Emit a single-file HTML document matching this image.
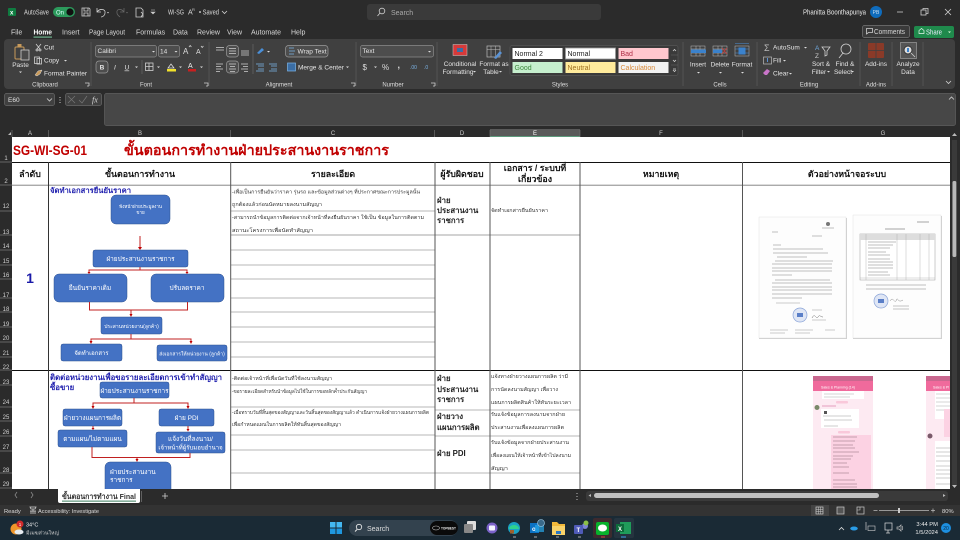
<!DOCTYPE html>
<html><head><meta charset="utf-8"><style>
html,body{margin:0;padding:0;background:#2b2b2b;width:960px;height:540px;overflow:hidden}
svg{display:block;font-family:"Liberation Sans","Noto Sans CJK SC","DejaVu Sans",sans-serif;filter:blur(.35px)}
.u{font-size:7px;fill:#d8d8d8}
.m{text-anchor:middle}
.w{font-size:6.5px;fill:#e4e4e4}
.h{font-size:6px;fill:#cfcfcf;text-anchor:middle}
.b{font-size:6.5px;fill:#fff;text-anchor:middle}
.th{font-size:8.8px;font-weight:bold;fill:#111;text-anchor:middle}
.c{font-size:5px;fill:#333}
.d{font-size:7.8px;font-weight:bold;fill:#222}
.ic{fill:none;stroke:#d0d0d0;stroke-width:.8}
.bx{fill:#4472c4;stroke:#2f528f;stroke-width:.5}
.ar{fill:none;stroke:#c02020;stroke-width:1}
.ah{fill:#c00000}
.cl{stroke:#a0a0a0;stroke-width:.7}
.vl{stroke:#555;stroke-width:1}
</style></head><body>
<svg width="960" height="540" viewBox="0 0 960 540" xmlns="http://www.w3.org/2000/svg">
<rect width="960" height="540" fill="#2b2b2b"/>
<!-- title bar -->
<rect x="8" y="8" width="8" height="8" rx="1" fill="#107c41"/><text x="10" y="14.5" font-size="6" font-weight="bold" fill="#fff">x</text>
<text x="24" y="14.500" class="u" textLength="25" lengthAdjust="spacingAndGlyphs">AutoSave</text>
<rect x="53" y="7" width="22" height="10" rx="5" fill="#2c9a5c"/><text x="56" y="14.5" font-size="6" fill="#dff">On</text><circle cx="70" cy="12" r="3.600" fill="#111"/>
<path class="ic" d="M82 8h7l1 1v7h-8zM84 8v3h4v-3M84 16v-3h4v3"/>
<path class="ic" d="M97 8v4h4M97 12c3-4 9-3 8 1 0 2-2 4-4 4"/><path d="M107 12l2 0-1 1.500z" fill="#ccc"/>
<path fill="none" stroke="#666" stroke-width=".8" d="M124 8v4h-4M124 12c-3-4-8-3-7 1 0 2 2 3 3 4"/><path d="M126 12l2 0-1 1.500z" fill="#666"/>
<path class="ic" d="M136 8h5l2 2v7h-7zM141 12l2 2-2 3"/>
<path d="M151 10h4M151 12l2 2 2-2z" stroke="#ccc" stroke-width=".6" fill="#ccc"/>
<text x="168" y="14.500" class="u" textLength="16" lengthAdjust="spacingAndGlyphs">WI-SG</text><text x="188" y="14.500" class="u">A</text><text x="192" y="11" font-size="4" fill="#ccc">R</text>
<text x="199" y="14.500" class="u" textLength="20" lengthAdjust="spacingAndGlyphs">• Saved</text><path class="ic" d="M222 11l2.500 2.500 2.500-2.500"/>
<rect x="367" y="4" width="234" height="16" rx="3" fill="#3a3a3a"/>
<circle cx="382" cy="11" r="2.800" class="ic"/><path class="ic" d="M380 13l-2.500 3"/><text x="391" y="15" class="u" style="fill:#aaa">Search</text>
<text x="803" y="14.500" class="u" style="fill:#e8e8e8" textLength="63" lengthAdjust="spacingAndGlyphs">Phanitta Boonthapunya</text>
<circle cx="876" cy="12" r="6" fill="#0f6cbd"/><text x="876" y="14" font-size="5" fill="#cde" text-anchor="middle">PB</text>
<path stroke="#ccc" d="M897 12h6" stroke-width=".8"/><rect x="921" y="10" width="5" height="5" class="ic"/><path class="ic" d="M923 10v-1.500h5v5h-2"/>
<path class="ic" d="M945 9l6 6M951 9l-6 6"/>
<!-- tabs -->
<g class="u">
<text x="11" y="34.500">File</text><text x="33.500" y="34.500" style="fill:#fff;font-weight:bold" textLength="18.500" lengthAdjust="spacingAndGlyphs">Home</text><text x="62" y="34.500">Insert</text><text x="89" y="34.500" textLength="36" lengthAdjust="spacingAndGlyphs">Page Layout</text><text x="136" y="34.500">Formulas</text><text x="173" y="34.500">Data</text><text x="197" y="34.500">Review</text><text x="227" y="34.500">View</text><text x="251" y="34.500">Automate</text><text x="291" y="34.500">Help</text></g>
<rect x="33.500" y="36.500" width="18.500" height="1.200" fill="#6fb58e"/>
<rect x="862.500" y="25.500" width="47" height="12" rx="2" fill="#3a3a3a" stroke="#777" stroke-width=".7"/>
<path class="ic" d="M866.500 28.500h6v4h-4l-2 1.500z"/><text x="874" y="34" class="u" textLength="31" lengthAdjust="spacingAndGlyphs">Comments</text>
<rect x="914" y="26" width="40" height="12" rx="2" fill="#1f8a4c"/><path d="M919 33.500v-3l2.500-2 2.500 2v3z" fill="none" stroke="#e8f8ee" stroke-width=".7"/><text x="926" y="34.500" class="u" style="fill:#eef" textLength="16" lengthAdjust="spacingAndGlyphs">Share</text><path d="M948 31.500h3l-1.500 1.500z" fill="#dfd"/>
<!-- ribbon -->
<rect x="4" y="39" width="951" height="50" rx="4" fill="#404040"/>
<g stroke="#585858" stroke-width=".8"><path d="M91 42v44M209 42v44M356 42v44M437 42v44M683 42v44M757 42v44M860 42v44M892 42v44M923 42v44"/></g>
<g class="w m" style="font-size:6px;fill:#ddd">
<text x="45" y="86.500">Clipboard</text><text x="146" y="86.500">Font</text><text x="279" y="86.500">Alignment</text><text x="393" y="86.500">Number</text><text x="560" y="86.500">Styles</text><text x="720" y="86.500">Cells</text><text x="809" y="86.500">Editing</text><text x="876" y="86.500">Add-ins</text></g>
<!-- clipboard -->
<rect x="15" y="47" width="9" height="12" rx="1" fill="none" stroke="#c89a5a" stroke-width="1"/><rect x="17.500" y="44" width="4" height="3" fill="#c89a5a"/><rect x="21" y="50" width="8" height="10" fill="#4a4a4a" stroke="#ddd" stroke-width=".7"/>
<text x="20.500" y="67" class="w m">Paste</text><path d="M19 71.500h3l-1.500 1.500z" fill="#ddd"/>
<path class="ic" d="M36 44l4 5M41 44l-4 5"/><circle cx="37" cy="50" r="1" class="ic"/><circle cx="40" cy="50" r="1" class="ic"/><text x="44" y="49.500" class="w">Cut</text>
<rect x="34.500" y="57" width="5" height="6.500" class="ic"/><rect x="37" y="58.500" width="4.500" height="5.500" class="ic"/><text x="44" y="62.500" class="w">Copy</text><path d="M64 60h3l-1.500 1.500z" fill="#ddd"/>
<path d="M35 75l3-4 4-1-2 4-3 2z" fill="#c89a5a" stroke="#ddd" stroke-width=".5"/><text x="44" y="75.500" class="w">Format Painter</text>
<path class="ic" d="M85 83h4v3M87 86h2"/>
<!-- font -->
<rect x="95.500" y="45.500" width="61" height="11.500" rx="2" fill="#4d4d4d" stroke="#8a8a8a" stroke-width=".7"/><text x="97.500" y="53" class="w">Calibri</text><path d="M152 51h3l-1.500 1.500z" fill="#ddd"/>
<rect x="158.500" y="45.500" width="21" height="11.500" rx="2" fill="#4d4d4d" stroke="#8a8a8a" stroke-width=".7"/><text x="160" y="53.500" class="w">14</text><path d="M174.500 51h3l-1.500 1.500z" fill="#ddd"/>
<text x="183" y="54" font-size="8" fill="#ddd">A</text><path d="M189 47l1.200-1.500 1.200 1.500" class="ic"/><text x="196" y="54" font-size="7" fill="#ddd">A</text><path d="M201 46l1.200 1.500 1.200-1.500" class="ic"/>
<rect x="96" y="61" width="12" height="12" rx="3" fill="#4d4d4d" stroke="#9a9a9a" stroke-width=".7"/><text x="102" y="69.500" class="w m" style="font-weight:bold">B</text>
<text x="114" y="69.500" class="w" style="font-style:italic">I</text><text x="124.500" y="69.500" class="w" style="text-decoration:underline">U</text><path d="M135 66.500h3l-1.500 1.500z" fill="#ddd"/>
<path stroke="#666" d="M142 60v14M253 44v30" stroke-width=".7"/>
<rect x="145.500" y="63" width="7.500" height="7.500" class="ic"/><path class="ic" d="M149 63v7.500M145.500 66.500h7.500"/><path d="M157 66.500h3l-1.500 1.500z" fill="#ddd"/>
<path d="M168 68l3-4 3 4z" fill="none" stroke="#ddd" stroke-width=".8"/><rect x="167" y="69" width="9" height="2.500" fill="#f2e22a"/><path d="M179 66.500h3l-1.500 1.500z" fill="#ddd"/>
<text x="188" y="68" font-size="7" fill="#eee">A</text><rect x="188" y="69" width="8" height="2.500" fill="#c81f1f"/><path d="M200 66.500h3l-1.500 1.500z" fill="#ddd"/>
<path class="ic" d="M204 83h4v3M206 86h2"/>
<!-- alignment -->
<path class="ic" d="M216 47.500h8M216 50h8"/><rect x="226.500" y="45.500" width="12" height="11.500" rx="3" fill="#4d4d4d" stroke="#9a9a9a" stroke-width=".7"/><path class="ic" d="M229 48.500h7M229 51h7M229 53.500h7M241 53h8M241 55h8M241 51h8"/>
<path d="M257 53l5-5 2 2-5 4z" fill="#4a8fd8"/><path d="M267 51h3l-1.500 1.500z" fill="#ddd"/>
<rect x="285.500" y="45.500" width="42.500" height="11.500" rx="3" fill="#4d4d4d" stroke="#9a9a9a" stroke-width=".7"/><path class="ic" d="M289 48h5M289 51h6M289 54h5" style="stroke:#7cb5e8"/><text x="297.500" y="53.500" class="w">Wrap Text</text>
<path class="ic" d="M216 64h7M216 66.500h5M216 69h7M216 71.500h4"/><rect x="226.500" y="61" width="12" height="12" rx="3" fill="#4d4d4d" stroke="#9a9a9a" stroke-width=".7"/><path class="ic" d="M229 64h7M230 66.500h5M229 69h7M230 71.500h5M241 64h7M243 66.500h5M241 69h7M244 71.500h4"/>
<path class="ic" d="M256 64h8M256 71h8M258 66h6M258 69h6" style="stroke:#7cb5e8"/><path class="ic" d="M269 64h8M269 71h8M271 66h6M271 69h6" style="stroke:#7cb5e8"/>
<rect x="287.500" y="63" width="8" height="8" fill="#3b6ea5" stroke="#7cb5e8" stroke-width=".7"/><text x="298" y="69.500" class="w">Merge &amp; Center</text><path d="M346 66.500h3l-1.500 1.500z" fill="#ddd"/>
<path class="ic" d="M351 83h4v3M353 86h2"/>
<!-- number -->
<rect x="360.500" y="45.500" width="73" height="11.500" rx="2" fill="#4d4d4d" stroke="#8a8a8a" stroke-width=".7"/><text x="362.500" y="53" class="w">Text</text><path d="M428 51h3l-1.500 1.500z" fill="#ddd"/>
<text x="362.500" y="70" font-size="8" fill="#ddd">$</text><path d="M374 66.500h3l-1.500 1.500z" fill="#ddd"/><text x="382" y="70" font-size="8" fill="#ddd">%</text><text x="397.500" y="68" font-size="9" font-weight="bold" fill="#ddd">,</text>
<text x="410" y="69" font-size="5" fill="#7cb5e8">.00</text><text x="424" y="69" font-size="5" fill="#7cb5e8">.0</text>
<path class="ic" d="M431 83h4v3M433 86h2"/>
<!-- conditional -->
<rect x="453" y="44.500" width="14" height="11" fill="#d63a3a" stroke="#ccc" stroke-width=".5"/><rect x="457" y="48" width="6" height="4" fill="#3b6ea5"/>
<text x="460" y="66" class="w m">Conditional</text><text x="458" y="74" class="w m">Formatting</text><path d="M473 71h3l-1.500 1.500z" fill="#ddd"/>
<rect x="487" y="46" width="13" height="11" fill="none" stroke="#bbb" stroke-width=".7"/><path d="M487 49.500h13M491 46v11M495.500 46v11" stroke="#bbb" stroke-width=".5"/><path d="M494 58l6-7 2 2-6 6z" fill="#5a93d6"/>
<text x="494" y="66" class="w m">Format as</text><text x="491" y="74" class="w m">Table</text><path d="M499 71h3l-1.500 1.500z" fill="#ddd"/>
<!-- styles -->
<rect x="510" y="45.500" width="168" height="30" rx="2" fill="#3a3a3a" stroke="#555" stroke-width=".7"/>
<rect x="512.500" y="48" width="50" height="11" fill="#fff"/><text x="514.500" y="56" font-size="7" fill="#222">Normal 2</text>
<rect x="565.500" y="48" width="50" height="11" fill="#fff" stroke="#999" stroke-width=".8"/><text x="567.500" y="56" font-size="7" fill="#222">Normal</text>
<rect x="618.500" y="48" width="50" height="11" fill="#ffc7ce"/><text x="620.500" y="56" font-size="7" fill="#b03048">Bad</text>
<rect x="512.500" y="62" width="50" height="11" fill="#c6efce"/><text x="514.500" y="70" font-size="7" fill="#3e8a3e">Good</text>
<rect x="565.500" y="62" width="50" height="11" fill="#ffeb9c"/><text x="567.500" y="70" font-size="7" fill="#a07020">Neutral</text>
<rect x="618.500" y="62" width="50" height="11" fill="#f2f2f2"/><text x="620.500" y="70" font-size="7" fill="#d98a3a">Calculation</text>
<path d="M671 55h7M671 65h7" stroke="#666" stroke-width=".6"/><path d="M673 51l1.500-1.500 1.500 1.500M673 60l1.500 1.500 1.500-1.500M673 70l1.500 1.500 1.500-1.500M673 69h3" class="ic"/>
<!-- cells -->
<g stroke="#bbb" stroke-width=".5" fill="none"><rect x="691" y="46" width="14" height="10"/><path d="M691 49h14M691 53h14M696 46v10M700 46v10"/><rect x="713" y="46" width="14" height="10"/><path d="M713 49h14M713 53h14M718 46v10M722 46v10"/><rect x="735" y="46" width="14" height="10"/><path d="M735 49h14M735 53h14M735 43.500h14" stroke="#4a8fd8"/></g>
<rect x="691" y="49.500" width="15" height="3.500" fill="#3b82cc"/><rect x="713" y="49.500" width="9" height="3.500" fill="#3b82cc"/><path d="M722 48l5 6M727 48l-5 6" stroke="#c04040" stroke-width=".9"/><rect x="738.500" y="47.500" width="7" height="7" fill="#3b82cc"/>
<text x="698" y="66.500" class="w m">Insert</text><text x="720" y="66.500" class="w m">Delete</text><text x="742" y="66.500" class="w m">Format</text>
<path d="M697 72h3l-1.500 1.500zM719 72h3l-1.500 1.500zM741 72h3l-1.500 1.500z" fill="#ddd"/>
<!-- editing -->
<text x="764" y="51" font-size="9" fill="#bbb">Σ</text><text x="773" y="49.500" class="w">AutoSum</text><path d="M804 47h3l-1.500 1.500z" fill="#ddd"/>
<rect x="763.500" y="57" width="8" height="7" fill="none" stroke="#bbb" stroke-width=".7"/><path d="M767.500 58v4" stroke="#5a93d6"/><text x="773" y="62.500" class="w">Fill</text><path d="M783 60h3l-1.500 1.500z" fill="#ddd"/>
<path d="M763 73l4-4 3 2-3 4h-2z" fill="#c874c8"/><text x="773" y="75.500" class="w">Clear</text><path d="M789 73h3l-1.500 1.500z" fill="#ddd"/>
<text x="815" y="50" font-size="6.500" fill="#6fa7dc">A</text><text x="815" y="58" font-size="6.500" fill="#ccc">Z</text><path class="ic" d="M822 47h8l-3 4v4l-2 1v-5z"/>
<circle cx="846" cy="49" r="5" class="ic"/><path class="ic" d="M843 53l-4 5"/>
<text x="821" y="66" class="w m">Sort &amp;</text><text x="819" y="74" class="w m">Filter</text><path d="M827 71h3l-1.500 1.500z" fill="#ddd"/>
<text x="845" y="66" class="w m">Find &amp;</text><text x="843" y="74" class="w m">Select</text><path d="M851 71h3l-1.500 1.500z" fill="#ddd"/>
<!-- addins / analyze -->
<rect x="868" y="43" width="16" height="15" rx="1" fill="#8a3a28"/><path d="M876 43v15M868 50.500h16" stroke="#404040" stroke-width=".8"/>
<text x="876" y="66" class="w m">Add-ins</text>
<rect x="900.500" y="42.500" width="16" height="16" fill="#555" stroke="#aaa" stroke-width=".6"/><circle cx="908" cy="50" r="4" fill="#ddd" stroke="#333"/><rect x="907" y="48" width="2" height="4" fill="#3b82cc"/><path class="ic" d="M911 53l4 4"/>
<text x="908" y="66" class="w m">Analyze</text><text x="908" y="74" class="w m">Data</text>
<path class="ic" d="M946 81l2.500 2.500 2.500-2.500"/>
<!-- formula bar -->
<rect x="4.500" y="93.500" width="50" height="12" rx="2" fill="#404040" stroke="#6a6a6a" stroke-width=".7"/><text x="8" y="102" class="w">E60</text><path class="ic" d="M47 98.500l2.500 2.500 2.500-2.500"/>
<path d="M60 97v1M60 99.500v1M60 102v1" stroke="#ccc"/>
<rect x="65.500" y="93.500" width="36" height="12" rx="2" fill="#404040" stroke="#6a6a6a" stroke-width=".7"/><path d="M68 96l7 7M75 96l-7 7M79 100l3 3 5-7" stroke="#777" fill="none" stroke-width=".7"/><text x="92" y="102.500" font-size="8" font-family="Liberation Serif" font-style="italic" fill="#ddd">fx</text>
<rect x="104.500" y="93.500" width="851" height="32" rx="2" fill="#474747" stroke="#606060" stroke-width=".7"/><path class="ic" d="M949 99.500l2.500-2.500 2.500 2.500"/>
<!-- column header -->
<rect x="0" y="127" width="960" height="10" fill="#2b2b2b"/>
<rect x="490" y="129" width="90" height="7" fill="#5a5a5a"/><rect x="490" y="136" width="90" height="1" fill="#5d9a7c"/>
<path d="M8 135l3-3v3z" fill="#bbb"/>
<g stroke="#777" stroke-width=".6"><path d="M12 130v7M48.500 130v7M230.500 130v7M434.500 130v7M490 130v7M580 130v7M742.500 130v7"/></g>
<text x="30" y="134.800" class="h">A</text><text x="140" y="134.800" class="h">B</text><text x="333" y="134.800" class="h">C</text><text x="462" y="134.800" class="h">D</text><text x="535" y="134.800" class="h" style="fill:#fff">E</text><text x="661" y="134.800" class="h">F</text><text x="883" y="134.800" class="h">G</text>
<!-- row header -->
<g stroke="#7a7a7a" stroke-width=".7"><path d="M0 162h12M0 185h12M0 211h12M0 235h12M0 250h12M0 265h12M0 279h12M0 298h12M0 312h12M0 327h12M0 342h12M0 357h12M0 370h12M0 385h12M0 407h12M0 421h12M0 436h12M0 451h12M0 473h12M0 488h12"/></g>
<g class="h"><text x="6" y="160">1</text><text x="6" y="183">2</text><text x="6" y="208">12</text><text x="6" y="234">13</text><text x="6" y="248">14</text><text x="6" y="263">15</text><text x="6" y="277">16</text><text x="6" y="297">17</text><text x="6" y="311">18</text><text x="6" y="326">19</text><text x="6" y="340">20</text><text x="6" y="355">21</text><text x="6" y="369">22</text><text x="6" y="384">23</text><text x="6" y="404">24</text><text x="6" y="419">25</text><text x="6" y="434">26</text><text x="6" y="449">27</text><text x="6" y="472">28</text><text x="6" y="486">29</text></g>
<!-- sheet -->
<rect x="12" y="137" width="938" height="352" fill="#fff"/>
<text x="13" y="155" font-weight="bold" fill="#c00000" style="font-size:14px" textLength="74" lengthAdjust="spacingAndGlyphs">SG-WI-SG-01</text>
<text x="124" y="155" font-weight="bold" fill="#c00000" style="font-size:14.300px" textLength="265" lengthAdjust="spacingAndGlyphs">ขั้นตอนการทำงานฝ่ายประสานงานราชการ</text>
<!-- grid lines -->
<g class="cl"><path d="M231 211h204M231 250h204M231 265h204M231 279h204M231 298h204M231 312h204M231 327h204M231 342h204M231 357h204M231 385h204M231 407h204M231 435h204M231 450h204M231 473h349M435 410h145M435 436h145"/></g>
<path d="M231 235h349" stroke="#888" stroke-width=".8"/>
<path d="M12 162.500h938M12 370.500h938" stroke="#111" stroke-width="1.100"/>
<path d="M12 185.200h938" stroke="#777" stroke-width=".9"/>
<g class="vl"><path d="M48.500 162V489" style="stroke:#333"/><path d="M230.700 162V489M435 162V489M490 162V489M580 162V489M742.500 162V489"/></g>
<!-- header text -->
<text x="30" y="177" class="th">ลำดับ</text><text x="140" y="177" class="th">ขั้นตอนการทำงาน</text><text x="333" y="177" class="th">รายละเอียด</text><text x="462" y="177" class="th">ผู้รับผิดชอบ</text><text x="535" y="171" class="th">เอกสาร / ระบบที่</text><text x="535" y="182" class="th">เกี่ยวข้อง</text><text x="661" y="177" class="th">หมายเหตุ</text><text x="847" y="177" class="th">ตัวอย่างหน้าจอระบบ</text>
<text x="30" y="283" font-size="14" font-weight="bold" fill="#1a1aa8" text-anchor="middle">1</text>
<!-- flow 1 -->
<text x="50" y="193" font-size="7.500" font-weight="bold" fill="#1f1fae" textLength="81" lengthAdjust="spacingAndGlyphs">จัดทำเอกสารยืนยันราคา</text>
<rect class="bx" x="111" y="195" width="59" height="29" rx="5"/><text class="b" x="140.500" y="208" style="font-size:4.500px">ฟังหน้าฝ่ายประมูลงาน</text><text class="b" x="140.500" y="214" style="font-size:4.500px">ขาย</text>
<path class="ar" d="M140 236v12"/><path class="ah" d="M138 247h4l-2 3z"/>
<rect class="bx" x="93" y="250" width="95" height="17" rx="2"/><text class="b" x="140.500" y="261">ฝ่ายประสานงานราชการ</text>
<path class="ar" d="M140 267v3M89 272v-2h98v2"/><path class="ah" d="M87.500 272h3l-1.500 2zM185.500 272h3l-1.500 2z"/>
<rect class="bx" x="54" y="274" width="73" height="28" rx="5"/><text class="b" x="90" y="290">ยืนยันราคาเดิม</text>
<rect class="bx" x="151" y="274" width="73" height="28" rx="5"/><text class="b" x="187" y="290">ปรับลดราคา</text>
<path class="ar" d="M89.500 302v8h98v-8M131 310v5"/><path class="ah" d="M129.500 314h3l-1.500 3z"/>
<rect class="bx" x="101" y="317" width="61" height="17" rx="2"/><text class="b" x="131.500" y="328" style="font-size:5px">ประสานหน่วยงาน(ลูกค้า)</text>
<path class="ar" d="M131 334v5M91 342v-3h100v3"/><path class="ah" d="M89.500 341h3l-1.500 3zM189.500 341h3l-1.500 3z"/>
<rect class="bx" x="61" y="344" width="61" height="17" rx="2"/><text class="b" x="91.500" y="355" style="font-size:6px">จัดทำเอกสาร</text>
<rect class="bx" x="157" y="345" width="70" height="16" rx="2"/><text class="b" x="192" y="355.500" style="font-size:5px">ส่งเอกสารให้หน่วยงาน (ลูกค้า)</text>
<!-- flow 2 -->
<text x="50" y="380" font-size="7.800" font-weight="bold" fill="#1f1fae" textLength="172" lengthAdjust="spacingAndGlyphs">ติดต่อหน่วยงานเพื่อขอรายละเอียดการเข้าทำสัญญา</text>
<text x="50" y="390" font-size="7.800" font-weight="bold" fill="#1f1fae">ซื้อขาย</text>
<rect class="bx" x="100" y="382" width="69" height="16" rx="2"/><text class="b" x="134.500" y="393">ฝ่ายประสานงานราชการ</text>
<path class="ar" d="M134 398v5M93 407v-4h95v4"/><path class="ah" d="M91.500 406h3l-1.500 3zM186.500 406h3l-1.500 3z"/>
<rect class="bx" x="63" y="409" width="59" height="17" rx="2"/><text class="b" x="92.500" y="420">ฝ่ายวางแผนการผลิต</text>
<rect class="bx" x="159" y="409" width="55" height="17" rx="2"/><text class="b" x="186.500" y="420">ฝ่าย PDI</text>
<path class="ar" d="M93 426v3M188 426v3"/><path class="ah" d="M91.500 428h3l-1.500 2zM186.500 429h3l-1.500 2.500z"/>
<rect class="bx" x="58" y="430" width="69" height="17" rx="2"/><text class="b" x="92.500" y="441">ตามแผน/ไม่ตามแผน</text>
<rect class="bx" x="156" y="432" width="69" height="21" rx="2"/><text class="b" x="190.500" y="441">แจ้งวันที่ลงนาม/</text><text class="b" x="190.500" y="449.500" style="font-size:6px">เจ้าหน้าที่ผู้รับมอบอำนาจ</text>
<path class="ar" d="M92 447v10.500h98v-4.500M137 457v3"/><path class="ah" d="M135.500 459h3l-1.500 3z"/>
<rect class="bx" x="105" y="462" width="66" height="36" rx="5"/>
<text x="110" y="474" class="b" style="text-anchor:start">ฝ่ายประสานงาน</text><text x="110" y="482" class="b" style="text-anchor:start">ราชการ</text>
<!-- C text -->
<g class="c">
<text x="232" y="193.500" textLength="188" lengthAdjust="spacingAndGlyphs">-เพื่อเป็นการยืนยันว่าราคา รุ่นรถ และข้อมูลส่วนต่างๆ ที่ประกาศขณะการประมูลนั้น</text>
<text x="232" y="206" textLength="90" lengthAdjust="spacingAndGlyphs">ถูกต้องแล้วก่อนนัดหมายลงนามสัญญา</text>
<text x="232" y="219" textLength="192" lengthAdjust="spacingAndGlyphs">-สามารถนำข้อมูลการติดต่อจากเจ้าหน้าที่ลงยืนยันราคา ใช้เป็น ข้อมูลในการติดตาม</text>
<text x="232" y="232" textLength="81" lengthAdjust="spacingAndGlyphs">สถานะโครงการเพื่อนัดทำสัญญา</text>
<text x="232" y="380" textLength="100" lengthAdjust="spacingAndGlyphs">-ติดต่อเจ้าหน้าที่เพื่อนัดวันที่ใช้ลงนามสัญญา</text>
<text x="232" y="393" textLength="135" lengthAdjust="spacingAndGlyphs">-ขอรายละเอียดสำหรับนำข้อมูลไปใช้ในการขอหลักค้ำประกันสัญญา</text>
<text x="232" y="414" textLength="197" lengthAdjust="spacingAndGlyphs">-เมื่อทราบวันที่สิ้นสุดของสัญญาและวันสิ้นสุดของสัญญาแล้ว ดำเนินการแจ้งฝ่ายวางแผนการผลิต</text>
<text x="232" y="426" textLength="109" lengthAdjust="spacingAndGlyphs">เพื่อกำหนดแผนในการผลิตให้ทันสิ้นสุดของสัญญา</text>
</g>
<!-- D text -->
<g class="d">
<text x="437" y="203">ฝ่าย</text><text x="437" y="213">ประสานงาน</text><text x="437" y="223">ราชการ</text>
<text x="437" y="381">ฝ่าย</text><text x="437" y="392">ประสานงาน</text><text x="437" y="402">ราชการ</text>
<text x="437" y="419">ฝ่ายวาง</text><text x="437" y="430">แผนการผลิต</text>
<text x="437" y="456">ฝ่าย PDI</text>
</g>
<!-- E text -->
<g class="c">
<text x="491" y="212" textLength="57" lengthAdjust="spacingAndGlyphs">จัดทำเอกสารยืนยันราคา</text>
<text x="491" y="378" textLength="77" lengthAdjust="spacingAndGlyphs">แจ้งทางฝ่ายวางแผนการผลิต ว่ามี</text><text x="491" y="391" textLength="67" lengthAdjust="spacingAndGlyphs">การนัดลงนามสัญญา เพื่อวาง</text><text x="491" y="404" textLength="80" lengthAdjust="spacingAndGlyphs">แผนการผลิตสินค้าให้ทันระยะเวลา</text>
<text x="491" y="416" textLength="74" lengthAdjust="spacingAndGlyphs">รับแจ้งข้อมูลการลงนามจากฝ่าย</text><text x="491" y="429" textLength="73" lengthAdjust="spacingAndGlyphs">ประสานงานเพื่อลงแผนการผลิต</text>
<text x="491" y="444" textLength="78" lengthAdjust="spacingAndGlyphs">รับแจ้งข้อมูลจากฝ่ายประสานงาน</text><text x="491" y="457" textLength="80" lengthAdjust="spacingAndGlyphs">เพื่อลงแผนให้เจ้าหน้าที่เข้าไปลงนาม</text><text x="491" y="470" textLength="17" lengthAdjust="spacingAndGlyphs">สัญญา</text>
</g>
<!-- doc thumbs -->
<rect x="759" y="218" width="88" height="121" fill="#cfcfcf"/><rect x="759" y="217" width="87" height="121" fill="#fdfdfd" stroke="#ddd" stroke-width=".4"/>
<rect x="853" y="216" width="89" height="123" fill="#cfcfcf"/><rect x="853" y="215" width="88" height="123" fill="#fdfdfd" stroke="#ddd" stroke-width=".4"/>
<circle cx="828" cy="224" r="2" fill="#777"/><path d="M822 228h12M772 232h6M812 236h10M773 245h8M773 249h50M773 253h55M777 257h30" stroke="#aaa" stroke-width=".7"/>
<path d="M775 261h58M772 264h60M772 268h60M772 271h60M772 275h20M775 280h55M772 283h60M772 287h60M772 290h60M772 294h60M772 298h30" stroke="#aaa" stroke-width=".7"/>
<path d="M776 303h24M812 310h10M812 320h14M770 330h18M795 330h18M825 330h10M770 333h15M795 333h15" stroke="#bbb" stroke-width=".7"/>
<circle cx="800" cy="315" r="7" fill="#dfe6f5" stroke="#8aa4d8" stroke-width=".7"/><rect x="797" y="313" width="6" height="4" fill="#5a7fc8"/>
<path d="M812 318c3-6 4 2 6-1 2-3 2 0 5 0" fill="none" stroke="#666" stroke-width=".5"/>
<path d="M917 222h12M885 229h20" stroke="#888" stroke-width=".7"/>
<rect x="860" y="234" width="75" height="46" fill="#fff" stroke="#999" stroke-width=".5"/><rect x="860" y="234" width="75" height="6" fill="#ddd"/>
<path d="M866 234v46M897 234v46M906 234v46M920 234v46M929 234v46M860 278h75" stroke="#aaa" stroke-width=".4"/>
<path d="M868 242h28M868 245h25M868 248h22M868 252h18M868 255h22M868 259h22M868 262h25M868 265h25M868 268h25M868 272h20M868 275h22" stroke="#aaa" stroke-width=".7"/>
<path d="M866 285h60M866 289h60" stroke="#aaa" stroke-width=".7"/>
<circle cx="881" cy="301" r="7" fill="#dfe6f5" stroke="#8aa4d8" stroke-width=".7"/><rect x="878" y="299" width="6" height="4" fill="#5a7fc8"/>
<path d="M890 301c3-5 4 2 6 0 2-6 1 3 7-1M893 306h16M893 309h16" fill="none" stroke="#888" stroke-width=".5"/>
<!-- phone 1 -->
<rect x="813" y="376" width="60" height="113" fill="#fdeaf2"/><rect x="813" y="376" width="60" height="5" fill="#c9688f"/><rect x="813" y="381" width="60" height="10" fill="#f06a9c"/>
<text x="821" y="388.500" font-size="3.500" fill="#fff">Sales &amp; Planning (14)</text>
<rect x="822" y="391" width="42" height="8" fill="#fff"/><path d="M824 394h30M824 397h26" stroke="#aaa" stroke-width=".6"/>
<rect x="836" y="401" width="12" height="2.500" rx="1" fill="#f9c8da"/>
<circle cx="817" cy="407.500" r="2.500" fill="#7a8a6a"/><path d="M822 406h14" stroke="#c58" stroke-width=".5"/>
<rect x="821" y="409" width="38" height="19" fill="#fff"/><path d="M823 416h28M824 420h28M824 426h14" stroke="#999" stroke-width=".6"/><rect x="824" y="411" width="3" height="3" fill="#555"/>
<rect x="838" y="431" width="12" height="2.500" rx="1" fill="#f9c8da"/>
<rect x="831" y="435" width="40" height="54" fill="#fcd2e3"/><path d="M833 437h24M833 441h22M833 445h20M833 448h22M833 452h26M833 456h20M833 459h18M833 463h14M833 467h16M833 473h16M833 480h22M833 484h24M833 487h24" stroke="#8a6a7a" stroke-width=".6"/>
<!-- phone 2 -->
<rect x="926" y="376" width="24" height="113" fill="#fdeaf2"/><rect x="926" y="376" width="24" height="5" fill="#c9688f"/><rect x="926" y="381" width="24" height="10" fill="#f06a9c"/>
<text x="933" y="388.500" font-size="3.500" fill="#fff">Sales &amp; Pl</text>
<rect x="935" y="391" width="15" height="28" fill="#fff"/><path d="M936 394h14M936 398h14M936 402h14M936 406h14M936 410h14" stroke="#aaa" stroke-width=".6"/>
<rect x="944" y="409" width="6" height="28" fill="#fcd2e3"/>
<circle cx="930" cy="436" r="2.500" fill="#7a5a6a"/><rect x="935" y="441" width="15" height="48" fill="#fff"/><path d="M936 448h14M936 452h14M936 456h14M936 461h14M936 466h14M936 470h14M936 474h14M936 478h14M936 484h14" stroke="#999" stroke-width=".6"/>
<!-- v scrollbar -->
<rect x="950" y="127" width="10" height="364" fill="#2b2b2b"/>
<rect x="952" y="140" width="5" height="345" fill="#3a3a3a"/>
<rect x="952.500" y="181" width="3.800" height="76" rx="1.500" fill="#b8b8b8"/>
<path d="M952 136l2.500-3 2.500 3z" fill="#bbb"/><path d="M952 485h5l-2.500 3z" fill="#bbb"/>
<!-- sheet tab bar -->
<rect x="0" y="489" width="960" height="16" fill="#2b2b2b"/>
<path class="ic" d="M17 498l-2-3 2-3M31 492l2 3-2 3" style="stroke:#888"/>
<path d="M58 489h82v12q0 2-2 2H60q-2 0-2-2z" fill="#fff"/>
<text x="62" y="499" font-size="7.500" font-weight="bold" fill="#333" textLength="74" lengthAdjust="spacingAndGlyphs">ขั้นตอนการทำงาน Final</text>
<rect x="62" y="500.500" width="74" height="1.300" fill="#6a9c84"/>
<path d="M141.500 491v11" stroke="#777" stroke-width=".7"/><path class="ic" d="M162 496h6M165 493v6"/>
<path d="M577 493v1M577 496v1M577 499v1" stroke="#bbb"/>
<rect x="586" y="491" width="362" height="10" rx="3" fill="#3a3a3a"/><rect x="594" y="493" width="285" height="5" rx="2.500" fill="#c0c0c0"/>
<path d="M591 494v3l-2.500-1.500zM943 494v3l2.500-1.500z" fill="#bbb"/>
<!-- status -->
<rect x="0" y="505" width="960" height="11" fill="#333"/>
<text x="4" y="513" font-size="5.800" fill="#ddd">Ready</text>
<path class="ic" d="M30 507h6l-1 2h-4zM30 511h6M31 511v3M35 511v3M33 509v5"/>
<text x="38" y="513" font-size="5.800" fill="#ddd" textLength="61" lengthAdjust="spacingAndGlyphs">Accessibility: Investigate</text>
<rect x="811" y="505" width="18" height="11" fill="#444"/>
<rect x="816" y="507" width="7" height="7" fill="none" stroke="#ccc" stroke-width=".7"/><path d="M816 509.300h7M816 511.700h7M818.300 507v7M820.700 507v7" stroke="#ccc" stroke-width=".5"/>
<rect x="837" y="507" width="7" height="7" fill="#555" stroke="#ccc" stroke-width=".7"/><rect x="857" y="507" width="7" height="7" fill="none" stroke="#ccc" stroke-width=".7"/><path d="M857 510h3v-3" stroke="#ccc" fill="none" stroke-width=".6"/>
<path d="M873.500 510.500h4M879 510.500h50M931 510.500h4M933 508.500v4" stroke="#bbb" stroke-width=".7"/><rect x="898" y="508" width="2" height="5" fill="#ccc"/>
<text x="942" y="513" font-size="5.800" fill="#ddd">80%</text>
<!-- taskbar -->
<rect x="0" y="516" width="960" height="24" fill="#1a2a35"/>
<circle cx="16" cy="529" r="5.500" fill="#f0962a"/><ellipse cx="19" cy="532" rx="4.500" ry="2.500" fill="#e8ecf0"/><circle cx="20" cy="524" r="3.500" fill="#d02b2b"/><text x="20" y="526" font-size="4.500" fill="#fff" text-anchor="middle">1</text>
<text x="26" y="526.500" font-size="5.500" fill="#eee">34°C</text><text x="26" y="534.500" font-size="5" fill="#ccc" textLength="33" lengthAdjust="spacingAndGlyphs">มีเมฆส่วนใหญ่</text>
<rect x="330" y="522" width="5.500" height="5.500" fill="#44b8f2"/><rect x="336.500" y="522" width="5.500" height="5.500" fill="#44b8f2"/><rect x="330" y="528.500" width="5.500" height="5.500" fill="#1f97df"/><rect x="336.500" y="528.500" width="5.500" height="5.500" fill="#1f97df"/>
<rect x="349" y="520" width="109" height="16" rx="8" fill="#33424e"/><circle cx="359" cy="527" r="2.700" class="ic" style="stroke:#eee"/><path d="M357 529.500l-2 2" stroke="#eee" stroke-width=".9"/><text x="367" y="531" class="u" style="fill:#ddd">Search</text>
<rect x="430" y="521" width="28" height="14" rx="7" fill="#0a0a0a"/><ellipse cx="436" cy="528" rx="3.500" ry="2" fill="none" stroke="#bbb" stroke-width=".6"/><text x="441" y="529.500" font-size="3.200" font-weight="bold" fill="#eee">TOPBEST</text>
<rect x="467" y="521" width="9" height="9" fill="#ddd" rx="1"/><rect x="464" y="524" width="9" height="9" fill="#888" rx="1"/>
<circle cx="492" cy="528" r="5.500" fill="#7b62c9"/><rect x="489" y="525.500" width="6" height="5" rx="1" fill="#f4f4ff"/>
<circle cx="514" cy="528" r="6" fill="#1aa1c4"/><path d="M509 529a5 4 0 0 1 10 0h-4z" fill="#2fd18d"/><rect x="510" y="530" width="4" height="3.500" fill="#a0602c"/>
<rect x="530" y="523" width="9" height="10" fill="#0b72c4"/><text x="532" y="531" font-size="6" font-weight="bold" fill="#fff">o</text><rect x="535" y="525" width="9" height="7" fill="#28a8ea" opacity=".7"/><circle cx="541" cy="523" r="3.500" fill="#3a6a8a" stroke="#a8d4ef" stroke-width=".6"/>
<path d="M552 522h5l2 2h6v11h-13z" fill="#f2b93a"/><rect x="552" y="526" width="13" height="9" fill="#f8d36a"/><rect x="556" y="531" width="5" height="3" fill="#2a78c4"/>
<circle cx="585" cy="526" r="3" fill="#7b83d4"/><rect x="574" y="525" width="9" height="9" rx="1" fill="#4f5bb8"/><text x="576.500" y="532" font-size="6" font-weight="bold" fill="#fff">T</text><circle cx="586" cy="523" r="2.500" fill="#8cc045"/>
<rect x="593" y="518" width="19" height="20" rx="2" fill="#3d2a2e"/><rect x="596" y="522" width="13" height="13" rx="2" fill="#08b12c"/><ellipse cx="602.500" cy="528" rx="4.500" ry="3.500" fill="#fff"/>
<rect x="614" y="518" width="20" height="20" rx="2" fill="#25343f"/><rect x="620" y="522" width="11" height="12" fill="#1f9c5a"/><rect x="616" y="524" width="8" height="8" fill="#0d6b3a"/><text x="618" y="531" font-size="6" font-weight="bold" fill="#fff">X</text>
<path d="M513 537h3M534 537h3M556 537h3M578 537h3" stroke="#aaa" stroke-width="1"/><path d="M601 537h4" stroke="#d04040"/><path d="M621 537h5" stroke="#3aa0e8"/>
<path class="ic" d="M839 530l2.500-2.500 2.500 2.500" style="stroke:#ddd"/><ellipse cx="854" cy="528.500" rx="3.800" ry="2" fill="#2a9ce6"/>
<rect x="868" y="526" width="7" height="4.500" fill="none" stroke="#ccc" stroke-width=".6"/><path d="M866 522v8" stroke="#ccc" stroke-width=".7"/>
<rect x="885" y="523" width="7" height="7" fill="none" stroke="#ddd" stroke-width=".7"/><path d="M888 530v3M886 533h4" class="ic"/><path d="M897 527h2l2-2v6l-2-2h-2zM902 526c1 1 1 3 0 4" fill="none" stroke="#bbb" stroke-width=".7"/>
<text x="938" y="526" font-size="5.800" fill="#eee" text-anchor="end">3:44 PM</text><text x="938" y="534" font-size="5.800" fill="#eee" text-anchor="end">1/5/2024</text>
<circle cx="946" cy="528" r="5" fill="#1d8fe0"/><text x="946" y="530" font-size="5" fill="#0a2a44" text-anchor="middle">20</text>
</svg>
</body></html>
